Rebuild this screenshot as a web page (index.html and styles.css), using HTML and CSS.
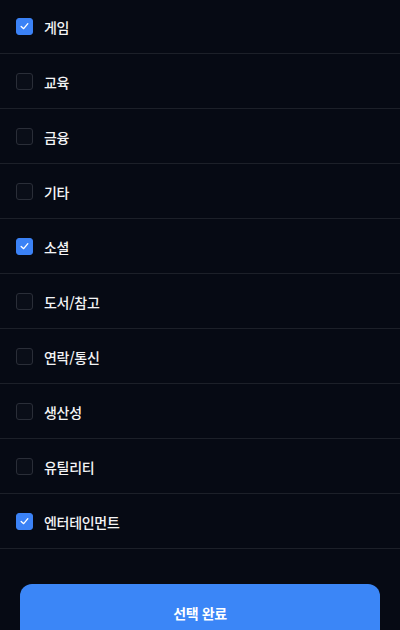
FILE: index.html
```html
<!DOCTYPE html>
<html lang="ko">
<head>
<meta charset="utf-8">
<title>카테고리 선택</title>
<link rel="stylesheet" href="styles.css">
</head>
<body>
<div class="screen">
  <ul class="list">
    <li class="row"><span class="box checked"><svg viewBox="0 0 18 18"><polyline points="5,9.5 8,12.2 13,6.2"/></svg></span><span class="label">게임</span></li>
    <li class="row"><span class="box"></span><span class="label">교육</span></li>
    <li class="row"><span class="box"></span><span class="label">금융</span></li>
    <li class="row"><span class="box"></span><span class="label">기타</span></li>
    <li class="row"><span class="box checked"><svg viewBox="0 0 18 18"><polyline points="5,9.5 8,12.2 13,6.2"/></svg></span><span class="label">소셜</span></li>
    <li class="row"><span class="box"></span><span class="label">도서/참고</span></li>
    <li class="row"><span class="box"></span><span class="label">연락/통신</span></li>
    <li class="row"><span class="box"></span><span class="label">생산성</span></li>
    <li class="row"><span class="box"></span><span class="label">유틸리티</span></li>
    <li class="row"><span class="box checked"><svg viewBox="0 0 18 18"><polyline points="5,9.5 8,12.2 13,6.2"/></svg></span><span class="label">엔터테인먼트</span></li>
  </ul>
  <div class="footer">
    <button class="done">선택 완료</button>
  </div>
</div>
</body>
</html>
```
FILE: styles.css
```css
html, body {
  margin: 0;
  padding: 0;
  background: #060a14;
}
body {
  font-family: "Noto Sans CJK KR", "Noto Sans", sans-serif;
  color: #f3f4f6;
  width: 400px;
  height: 630px;
  overflow: hidden;
}
.screen {
  display: flex;
  flex-direction: column;
}
.list {
  list-style: none;
  margin: -1px 0 0;
  padding: 0;
}
.row {
  display: flex;
  align-items: center;
  height: 54px;
  border-bottom: 1px solid #1c2029;
  padding-left: 16px;
  gap: 11px;
}
.box {
  width: 15px;
  height: 15px;
  border: 1.5px solid #2a2e38;
  border-radius: 3px;
  background: #0a0e18;
  display: flex;
  align-items: center;
  justify-content: center;
  flex-shrink: 0;
}
.box.checked {
  background: #3b82f6;
  border-color: #3b82f6;
}
.box svg {
  width: 18px;
  height: 18px;
  fill: none;
  stroke: #ffffff;
  stroke-width: 1.6;
  stroke-linecap: round;
  stroke-linejoin: round;
}
.label {
  font-size: 14px;
  font-weight: 500;
  letter-spacing: -0.3px;
  line-height: 1;
  padding-top: 1px;
}
.footer {
  padding: 35px 20px 0;
}
.done {
  width: 100%;
  height: 60px;
  border: none;
  border-radius: 12px;
  background: #3b86f7;
  color: #ffffff;
  font-family: "Noto Sans CJK KR", "Noto Sans", sans-serif;
  font-size: 14px;
  font-weight: 700;
  letter-spacing: -0.4px;
  padding: 0 0 2px;
}
```
